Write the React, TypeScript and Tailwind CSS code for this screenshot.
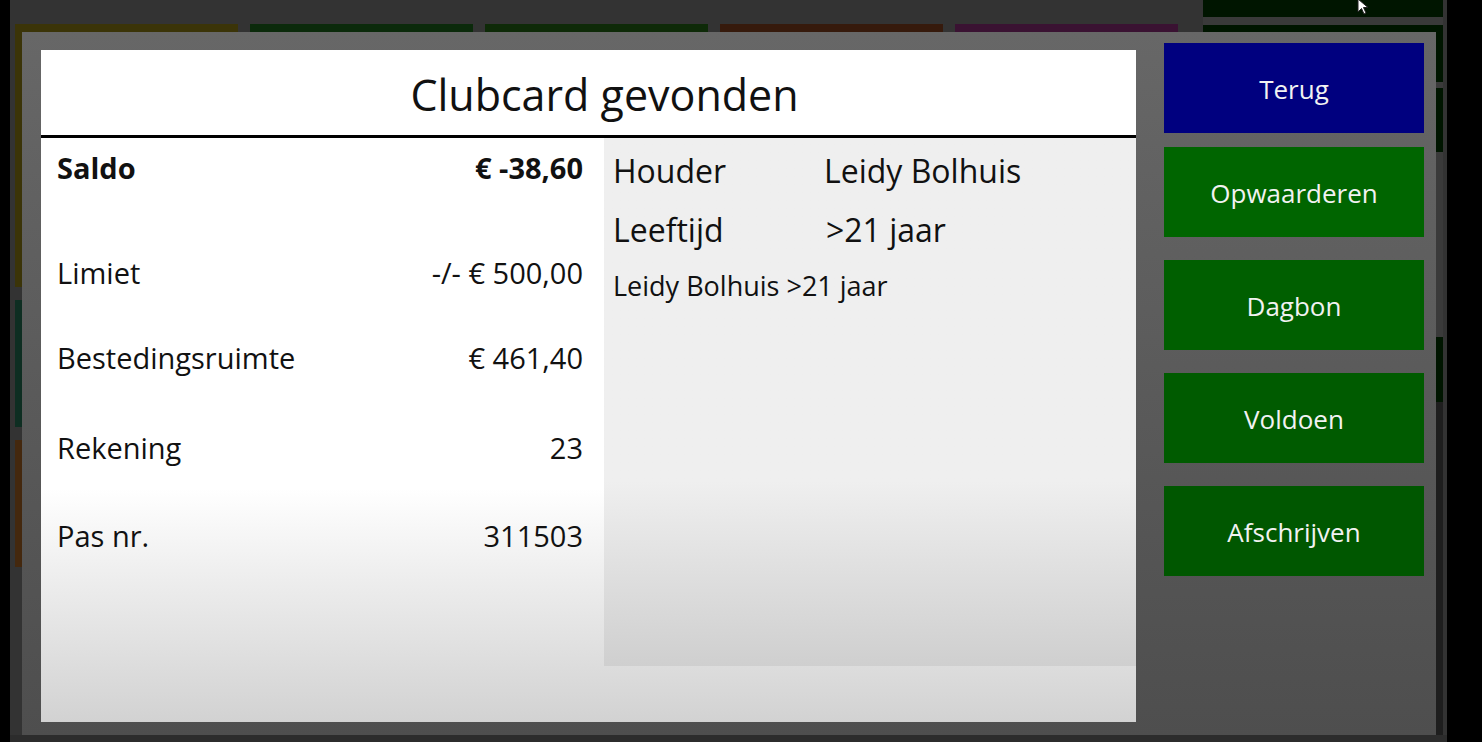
import React from "react";

const font = { fontFamily: '"Open Sans", "Noto Sans", sans-serif' };

const rows = [
  { label: "Saldo", value: "€ -38,60", bold: true, mt: "mt-[10px]" },
  { label: "Limiet", value: "-/- € 500,00", bold: false, mt: "mt-[65px]" },
  { label: "Bestedingsruimte", value: "€ 461,40", bold: false, mt: "mt-[45px]" },
  { label: "Rekening", value: "23", bold: false, mt: "mt-[50px]" },
  { label: "Pas nr.", value: "311503", bold: false, mt: "mt-[48px]" },
];

const buttons = [
  { label: "Terug", color: "bg-[#00007f]", mt: "" },
  { label: "Opwaarderen", color: "bg-[#006500]", mt: "mt-[14px]" },
  { label: "Dagbon", color: "bg-[#005f00]", mt: "mt-[23px]" },
  { label: "Voldoen", color: "bg-[#005b00]", mt: "mt-[23px]" },
  { label: "Afschrijven", color: "bg-[#005700]", mt: "mt-[23px]" },
];

function Background() {
  return (
    <div className="flex h-full flex-1 bg-[#333333]">
      <div className="flex gap-[12px] pl-[5px] pt-[24px]">
        <div className="flex w-[223px] flex-col gap-[13px]">
          <div className="h-[263px] bg-[#3b3408]" />
          <div className="h-[127px] bg-[#0e2e22]" />
          <div className="h-[127px] bg-[#44280e]" />
        </div>
        <div className="h-[120px] w-[223px] bg-[#0b2a0b]" />
        <div className="h-[120px] w-[223px] bg-[#0e2a08]" />
        <div className="h-[120px] w-[223px] bg-[#361a0c]" />
        <div className="h-[120px] w-[223px] bg-[#3a1232]" />
      </div>
      <div className="ml-[25px] flex w-[240px] flex-col bg-[#3a3a3a]">
        <div className="h-[17px] bg-[#001500]" />
        <div className="mt-[8px] h-[57px] bg-[#001500]" />
        <div className="mt-[6px] h-[64px] bg-[#001500]" />
        <div className="mt-[185px] h-[65px] bg-[#001500]" />
        <div className="flex-1 bg-[#1e1e1e]" />
      </div>
    </div>
  );
}

function Card() {
  return (
    <div className="mt-[18px] flex h-[672px] w-[1095px] flex-col bg-white text-[#111111]">
      <div className="flex h-[88px] shrink-0 items-center justify-center border-b-[3px] border-black pl-[32px] pt-[4px]">
        <h1 className="text-[43px] leading-none">Clubcard gevonden</h1>
      </div>
      <div className="flex flex-1 bg-gradient-to-b from-white via-white via-60% to-[#d2d2d2]">
        <div className="flex w-[563px] flex-col px-[16px] pr-[21px]">
          {rows.map((r) => (
            <div
              key={r.label}
              className={`flex h-[40px] items-center justify-between text-[29px] ${r.mt} ${
                r.bold ? "font-bold" : ""
              }`}
            >
              <span>{r.label}</span>
              <span>{r.value}</span>
            </div>
          ))}
        </div>
        <div className="flex h-[528px] w-[532px] flex-col bg-gradient-to-b from-[#efefef] via-[#efefef] via-65% to-[#cfcfcf] pl-[9px]">
          <div className="mt-[13px] flex h-[40px] items-center text-[32px]">
            <span className="w-[211px]">Houder</span>
            <span>Leidy Bolhuis</span>
          </div>
          <div className="mt-[19px] flex h-[40px] items-center text-[32px]">
            <span className="w-[213px]">Leeftijd</span>
            <span>&gt;21 jaar</span>
          </div>
          <div className="mt-[21px] flex h-[30px] items-center text-[27px]">
            Leidy Bolhuis &gt;21 jaar
          </div>
        </div>
      </div>
    </div>
  );
}

export default function App() {
  return (
    <div className="relative flex h-[742px] w-[1482px] overflow-hidden bg-black" style={font}>
      <div className="w-[10px] bg-black" />
      <Background />
      <div className="w-[35px] bg-black" />

      {/* dialog over the dimmed screen */}
      <div className="absolute left-[22px] top-[32px] flex h-[703px] w-[1414px] bg-gradient-to-b from-[#676767] to-[#4e4e4e] pl-[19px]">
        <Card />
        <div className="ml-[28px] mt-[11px] flex w-[260px] flex-col">
          {buttons.map((b) => (
            <div
              key={b.label}
              className={`flex h-[90px] items-center justify-center pt-[2px] text-[26px] text-[#f2f2f2] ${b.color} ${b.mt}`}
            >
              {b.label}
            </div>
          ))}
        </div>
      </div>
      <div className="absolute bottom-0 left-[10px] h-[7px] w-[1437px] bg-[#2c2c2c]" />

      {/* mouse cursor */}
      <svg className="absolute left-[1357px] top-[-2px]" width="16" height="18" viewBox="0 0 16 18">
        <path d="M1 1 L1 14 L4.5 10.5 L7 16 L9 15 L6.5 9.5 L11 9.5 Z" fill="#ffffff" stroke="#222" strokeWidth="1" />
      </svg>
    </div>
  );
}
